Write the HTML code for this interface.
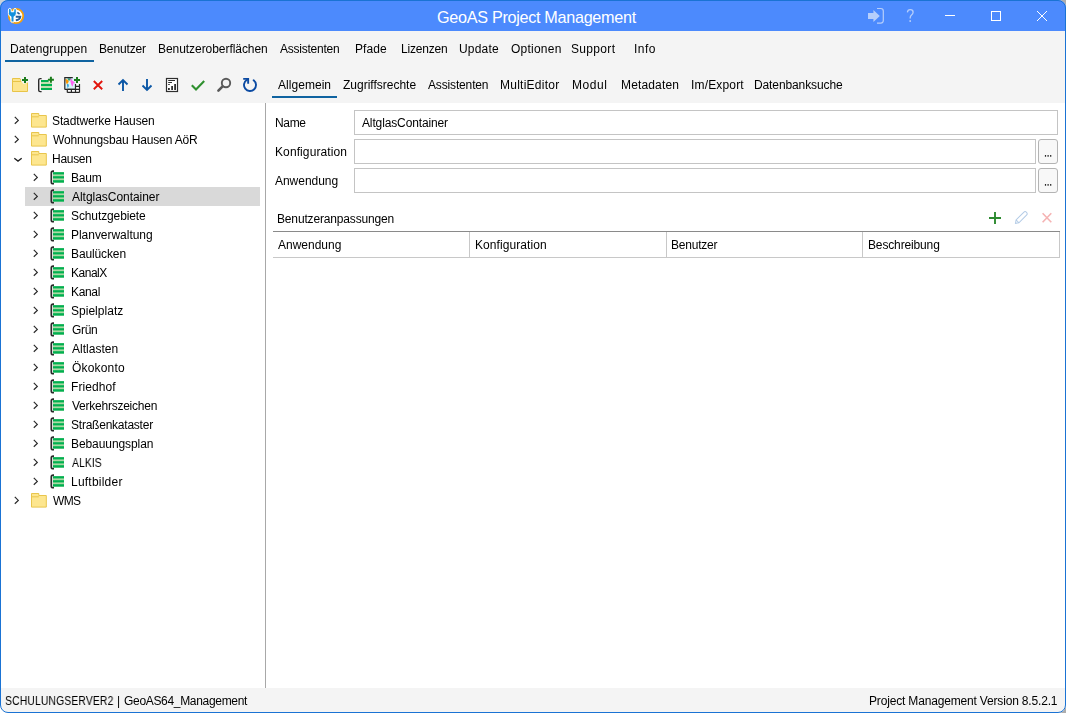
<!DOCTYPE html>
<html><head><meta charset="utf-8">
<style>
*{margin:0;padding:0;box-sizing:border-box}
html,body{width:1066px;height:713px;overflow:hidden;background:#adadad}
body{font-family:"Liberation Sans",sans-serif;font-size:12px;color:#000;position:relative}
.a{position:absolute}
.t{position:absolute;white-space:nowrap;line-height:16px;height:16px;will-change:transform}
#win{position:absolute;left:0;top:0;width:1066px;height:713px;border-radius:8px;background:#f4f4f4;overflow:hidden}
#frame{position:absolute;left:0;top:0;width:1066px;height:713px;border:1px solid #1a73d4;border-radius:8px}
.tb{position:absolute;border:1px solid #c4c4c4;background:#fff}
.btn{position:absolute;border:1px solid #b4b4b4;border-radius:3px;background:#f8f8f8}
</style></head><body>
<div class="a" style="left:0;top:700px;width:14px;height:13px;background:#fff"></div>
<div class="a" style="left:0;top:0;width:12px;height:12px;background:#c9d2d9"></div>
<div id="win">
 <div class="a" style="left:0;top:0;width:1066px;height:31px;background:#4c8afd"></div>
 <svg class="a" style="left:0px;top:0px" width="32" height="32" viewBox="0 0 32 32">
 <circle cx="16" cy="16" r="7.2" fill="#fff" stroke="#f6a10c" stroke-width="1.8"/>
 <path d="M8.4 10 Q8.4 8.4 9.8 8.4 Q11.2 8.4 11.2 10 V11.8 H13.8 V10 Q13.8 8.4 15.05 8.4 Q16.3 8.4 16.3 10 V13.5 Q16.3 16.3 14 16.6 V22 H11 V16.6 Q8.4 16.3 8.4 13.5 Z" fill="#1290dc" stroke="#fff" stroke-width="1"/>
 <path d="M17.3 12.3 L19.6 14.2" stroke="#2b5f96" stroke-width="1.6"/>
 <path d="M15.8 16.8 H20.3 Q20 19.6 15.8 20.2" fill="none" stroke="#2b5f96" stroke-width="1.9"/>
</svg>

 <div class="a" id="title" style="left:437px;top:6.5px;font-size:16.2px;line-height:20px;letter-spacing:-0.3px;color:#fff;white-space:nowrap">GeoAS Project Management</div>
 <svg class="a" style="left:850px;top:0px" width="216" height="31" viewBox="850 0 216 31">
 <path d="M868 13 H873.4 V9.9 L879.8 16 L873.4 22 V18.9 H868 Z" fill="#b6cefb"/>
 <path d="M877 8.5 H880.8 Q883.3 8.5 883.3 11 V20.6 Q883.3 23.1 880.8 23.1 H877" fill="none" stroke="#b6cefb" stroke-width="1.2"/>
 <path d="M907.4 12.4 Q907.6 9.6 910.3 9.6 Q913.1 9.6 913.1 12.2 Q913.1 13.8 911.3 15.2 Q910.2 16.1 910.2 17.8 V18.4" fill="none" stroke="#b6cefb" stroke-width="1.3"/>
 <rect x="909.4" y="20.2" width="1.6" height="1.7" fill="#b6cefb"/>
 <path d="M945 15.5 H955" stroke="#fff" stroke-width="1"/>
 <rect x="991.5" y="11.5" width="9" height="9" fill="none" stroke="#fff" stroke-width="1"/>
 <path d="M1037 11 L1047 21 M1047 11 L1037 21" stroke="#fff" stroke-width="1"/>
</svg>

 <div class="a" style="left:5px;top:60px;width:89px;height:2px;background:#0f63a0"></div>
 <svg class="a" style="left:0px;top:70px" width="270" height="30" viewBox="0 70 270 30">
 <!-- folder + -->
 <path d="M12.5 78.5 H20 L21 80 V81.5 H27.5 V91.5 H12.5 Z" fill="#fde58e" stroke="#e8c447" stroke-width="1"/>
 <path d="M12.5 81.5 H21" stroke="#e8c447" stroke-width="1"/>
 <path d="M21 76 H29.5 V82.5 H27.5 L23.5 84 L21 81 Z" fill="#f4f4f4"/>
 <path d="M25 77 V83 M22 80 H28" stroke="#1c7c1c" stroke-width="2"/>
 <!-- table + -->
 <path d="M41.6 78.6 H40.2 Q38.7 78.6 38.7 80.1 V90.3 Q38.7 91.6 40.2 91.6 H41.6" fill="none" stroke="#2b2b2b" stroke-width="1.4"/>
 <rect x="41" y="80" width="11" height="10" fill="#bfe0ae"/>
 <rect x="41" y="80" width="11" height="2" fill="#00b050"/>
 <rect x="41" y="84" width="11" height="2" fill="#00b050"/>
 <rect x="41" y="88" width="11" height="2" fill="#00b050"/>
 <path d="M46.5 76 H55 V83 H51 L49 82.5 Z" fill="#f4f4f4"/>
 <path d="M50.9 76.7 V82.7 M47.9 79.7 H53.9" stroke="#1c7c1c" stroke-width="2"/>
 <!-- map + -->
 <rect x="64.8" y="77.7" width="10.6" height="11.6" fill="#d9f3f7"/>
 <path d="M65.2 79 L67.5 79.5 L68.8 81.5 L67 84.5 L66 82.5 Z" fill="#ff9800"/>
 <path d="M67.5 78.3 L71 78.3 L70.5 80.2 L68.5 80.8 Z" fill="#2e9a76"/>
 <path d="M70.6 79 L71.8 78.8 L72 80.5 L74 81.8 L75.3 83.2 L73.5 83.2 L72.6 86.8 L71.4 85 L70.4 81.5 Z" fill="#ff66f2"/>
 <path d="M67 84 L68.8 84.6 L68.6 86.5 L67.6 88.2 Z" fill="#1e9ad6"/>
 <path d="M64.8 89.6 V77.7 H72.8" fill="none" stroke="#262626" stroke-width="1.2"/>
 <path d="M64.8 89.3 H75.5" stroke="#262626" stroke-width="1.2"/>
 <rect x="75.5" y="84.2" width="4" height="8.2" fill="#fff"/>
 <rect x="67.3" y="89.3" width="12.2" height="3.1" fill="#fff"/>
 <path d="M75.5 84 V92.4 M79.5 84 V92.4 M67.3 89.3 V92.4 M71.4 89.3 V92.4 M67.3 92.4 H79.5 M67.3 89.3 H79.5 M75.5 86.3 H79.5" fill="none" stroke="#262626" stroke-width="1.2"/>
 <path d="M77 77 V83 M74 80 H80" stroke="#1c7c1c" stroke-width="2"/>
 <!-- red x -->
 <path d="M93.8 81 L102.2 89.2 M102.2 81 L93.8 89.2" stroke="#e2140c" stroke-width="1.9"/>
 <!-- up arrow -->
 <path d="M123 79.8 V91 M118.5 84.5 L123 80 L127.5 84.5" fill="none" stroke="#0b57a6" stroke-width="1.9"/>
 <!-- down arrow -->
 <path d="M147 79 V90.2 M142.5 85.5 L147 90 L151.5 85.5" fill="none" stroke="#0b57a6" stroke-width="1.9"/>
 <!-- report -->
 <rect x="166.5" y="78.5" width="11" height="13" fill="#fff" stroke="#2e2e2e" stroke-width="1.2"/>
 <path d="M168.2 80.5 H175 M168.2 82.5 H172 M168.2 84.5 H169.8" stroke="#2e2e2e" stroke-width="1"/>
 <rect x="168" y="88" width="1.8" height="2" fill="#2e2e2e"/>
 <rect x="171.2" y="86" width="1.8" height="4" fill="#2e2e2e"/>
 <rect x="174.2" y="84" width="1.8" height="6" fill="#2e2e2e"/>
 <!-- check -->
 <path d="M191.8 85.2 L196 89.4 L204.2 81" fill="none" stroke="#2f902f" stroke-width="2.1"/>
 <!-- search -->
 <circle cx="226" cy="83" r="4.2" fill="none" stroke="#5a5a5a" stroke-width="1.9"/>
 <path d="M222.6 86.4 L218.4 90.6" stroke="#5a5a5a" stroke-width="2.6" stroke-linecap="round"/>
 <!-- refresh -->
 <path d="M247 79.8 A6 6 0 1 0 253.6 80.2" fill="none" stroke="#0b4aa2" stroke-width="1.9" stroke-linecap="round"/>
 <path d="M243.2 77.9 H249.1 V83.7 H247.2 V79.8 H243.2 Z" fill="#0b4aa2"/>
</svg>

 <div class="a" style="left:272px;top:96px;width:65px;height:2px;background:#0f63a0"></div>
 <div class="a" style="left:0;top:103px;width:265px;height:585px;background:#fff"></div>
 <div class="a" style="left:266px;top:103px;width:800px;height:585px;background:#fff"></div>
 <div class="a" style="left:265px;top:103px;width:1px;height:585px;background:#a8a8a8"></div>
 <svg class="a" style="left:13px;top:116px" width="8" height="10" viewBox="0 0 8 10"><path d="M1.8 0.8 L5.3 4.4 L1.8 7.8" fill="none" stroke="#2a2a2a" stroke-width="1.2"/></svg>
<svg class="a" style="left:31px;top:113.2px" width="17" height="16" viewBox="0 0 17 16"><path d="M0.5 0.5 H7.8 V2.5 H15.3 V14.1 H0.5 Z" fill="#fde68f" stroke="#e8c54c" stroke-width="1"/><path d="M0.5 3.8 H7.8" stroke="#e8c54c" stroke-width="1"/></svg>
<svg class="a" style="left:13px;top:135px" width="8" height="10" viewBox="0 0 8 10"><path d="M1.8 0.8 L5.3 4.4 L1.8 7.8" fill="none" stroke="#2a2a2a" stroke-width="1.2"/></svg>
<svg class="a" style="left:31px;top:132.2px" width="17" height="16" viewBox="0 0 17 16"><path d="M0.5 0.5 H7.8 V2.5 H15.3 V14.1 H0.5 Z" fill="#fde68f" stroke="#e8c54c" stroke-width="1"/><path d="M0.5 3.8 H7.8" stroke="#e8c54c" stroke-width="1"/></svg>
<svg class="a" style="left:13px;top:156px" width="10" height="8" viewBox="0 0 10 8"><path d="M1.3 2.2 L5 5.1 L8.7 2.2" fill="none" stroke="#222" stroke-width="1.3"/></svg>
<svg class="a" style="left:31px;top:151.2px" width="17" height="16" viewBox="0 0 17 16"><path d="M0.5 0.5 H7.8 V2.5 H15.3 V14.1 H0.5 Z" fill="#fde68f" stroke="#e8c54c" stroke-width="1"/><path d="M0.5 3.8 H7.8" stroke="#e8c54c" stroke-width="1"/></svg>
<svg class="a" style="left:32px;top:173px" width="8" height="10" viewBox="0 0 8 10"><path d="M1.8 0.8 L5.3 4.4 L1.8 7.8" fill="none" stroke="#2a2a2a" stroke-width="1.2"/></svg>
<svg class="a" style="left:50px;top:169px" width="15" height="17" viewBox="0 0 15 17"><path d="M4 2.15 H3.1 Q1.3 2.15 1.3 3.9 V13 Q1.3 14.75 3.1 14.75 H4" fill="none" stroke="#2a2a2a" stroke-width="1.7"/><rect x="3" y="3.1" width="11" height="10.6" fill="#acd9a4"/><rect x="3" y="3.2" width="11" height="2.2" fill="#00b050"/><rect x="3" y="7.2" width="11" height="2.2" fill="#00b050"/><rect x="3" y="11.2" width="11" height="2.4" fill="#00b050"/></svg>
<div class="a" style="left:25px;top:187px;width:235px;height:19px;background:#d9d9d9"></div>
<svg class="a" style="left:32px;top:192px" width="8" height="10" viewBox="0 0 8 10"><path d="M1.8 0.8 L5.3 4.4 L1.8 7.8" fill="none" stroke="#2a2a2a" stroke-width="1.2"/></svg>
<svg class="a" style="left:50px;top:188px" width="15" height="17" viewBox="0 0 15 17"><path d="M4 2.15 H3.1 Q1.3 2.15 1.3 3.9 V13 Q1.3 14.75 3.1 14.75 H4" fill="none" stroke="#2a2a2a" stroke-width="1.7"/><rect x="3" y="3.1" width="11" height="10.6" fill="#acd9a4"/><rect x="3" y="3.2" width="11" height="2.2" fill="#00b050"/><rect x="3" y="7.2" width="11" height="2.2" fill="#00b050"/><rect x="3" y="11.2" width="11" height="2.4" fill="#00b050"/></svg>
<svg class="a" style="left:32px;top:211px" width="8" height="10" viewBox="0 0 8 10"><path d="M1.8 0.8 L5.3 4.4 L1.8 7.8" fill="none" stroke="#2a2a2a" stroke-width="1.2"/></svg>
<svg class="a" style="left:50px;top:207px" width="15" height="17" viewBox="0 0 15 17"><path d="M4 2.15 H3.1 Q1.3 2.15 1.3 3.9 V13 Q1.3 14.75 3.1 14.75 H4" fill="none" stroke="#2a2a2a" stroke-width="1.7"/><rect x="3" y="3.1" width="11" height="10.6" fill="#acd9a4"/><rect x="3" y="3.2" width="11" height="2.2" fill="#00b050"/><rect x="3" y="7.2" width="11" height="2.2" fill="#00b050"/><rect x="3" y="11.2" width="11" height="2.4" fill="#00b050"/></svg>
<svg class="a" style="left:32px;top:230px" width="8" height="10" viewBox="0 0 8 10"><path d="M1.8 0.8 L5.3 4.4 L1.8 7.8" fill="none" stroke="#2a2a2a" stroke-width="1.2"/></svg>
<svg class="a" style="left:50px;top:226px" width="15" height="17" viewBox="0 0 15 17"><path d="M4 2.15 H3.1 Q1.3 2.15 1.3 3.9 V13 Q1.3 14.75 3.1 14.75 H4" fill="none" stroke="#2a2a2a" stroke-width="1.7"/><rect x="3" y="3.1" width="11" height="10.6" fill="#acd9a4"/><rect x="3" y="3.2" width="11" height="2.2" fill="#00b050"/><rect x="3" y="7.2" width="11" height="2.2" fill="#00b050"/><rect x="3" y="11.2" width="11" height="2.4" fill="#00b050"/></svg>
<svg class="a" style="left:32px;top:249px" width="8" height="10" viewBox="0 0 8 10"><path d="M1.8 0.8 L5.3 4.4 L1.8 7.8" fill="none" stroke="#2a2a2a" stroke-width="1.2"/></svg>
<svg class="a" style="left:50px;top:245px" width="15" height="17" viewBox="0 0 15 17"><path d="M4 2.15 H3.1 Q1.3 2.15 1.3 3.9 V13 Q1.3 14.75 3.1 14.75 H4" fill="none" stroke="#2a2a2a" stroke-width="1.7"/><rect x="3" y="3.1" width="11" height="10.6" fill="#acd9a4"/><rect x="3" y="3.2" width="11" height="2.2" fill="#00b050"/><rect x="3" y="7.2" width="11" height="2.2" fill="#00b050"/><rect x="3" y="11.2" width="11" height="2.4" fill="#00b050"/></svg>
<svg class="a" style="left:32px;top:268px" width="8" height="10" viewBox="0 0 8 10"><path d="M1.8 0.8 L5.3 4.4 L1.8 7.8" fill="none" stroke="#2a2a2a" stroke-width="1.2"/></svg>
<svg class="a" style="left:50px;top:264px" width="15" height="17" viewBox="0 0 15 17"><path d="M4 2.15 H3.1 Q1.3 2.15 1.3 3.9 V13 Q1.3 14.75 3.1 14.75 H4" fill="none" stroke="#2a2a2a" stroke-width="1.7"/><rect x="3" y="3.1" width="11" height="10.6" fill="#acd9a4"/><rect x="3" y="3.2" width="11" height="2.2" fill="#00b050"/><rect x="3" y="7.2" width="11" height="2.2" fill="#00b050"/><rect x="3" y="11.2" width="11" height="2.4" fill="#00b050"/></svg>
<svg class="a" style="left:32px;top:287px" width="8" height="10" viewBox="0 0 8 10"><path d="M1.8 0.8 L5.3 4.4 L1.8 7.8" fill="none" stroke="#2a2a2a" stroke-width="1.2"/></svg>
<svg class="a" style="left:50px;top:283px" width="15" height="17" viewBox="0 0 15 17"><path d="M4 2.15 H3.1 Q1.3 2.15 1.3 3.9 V13 Q1.3 14.75 3.1 14.75 H4" fill="none" stroke="#2a2a2a" stroke-width="1.7"/><rect x="3" y="3.1" width="11" height="10.6" fill="#acd9a4"/><rect x="3" y="3.2" width="11" height="2.2" fill="#00b050"/><rect x="3" y="7.2" width="11" height="2.2" fill="#00b050"/><rect x="3" y="11.2" width="11" height="2.4" fill="#00b050"/></svg>
<svg class="a" style="left:32px;top:306px" width="8" height="10" viewBox="0 0 8 10"><path d="M1.8 0.8 L5.3 4.4 L1.8 7.8" fill="none" stroke="#2a2a2a" stroke-width="1.2"/></svg>
<svg class="a" style="left:50px;top:302px" width="15" height="17" viewBox="0 0 15 17"><path d="M4 2.15 H3.1 Q1.3 2.15 1.3 3.9 V13 Q1.3 14.75 3.1 14.75 H4" fill="none" stroke="#2a2a2a" stroke-width="1.7"/><rect x="3" y="3.1" width="11" height="10.6" fill="#acd9a4"/><rect x="3" y="3.2" width="11" height="2.2" fill="#00b050"/><rect x="3" y="7.2" width="11" height="2.2" fill="#00b050"/><rect x="3" y="11.2" width="11" height="2.4" fill="#00b050"/></svg>
<svg class="a" style="left:32px;top:325px" width="8" height="10" viewBox="0 0 8 10"><path d="M1.8 0.8 L5.3 4.4 L1.8 7.8" fill="none" stroke="#2a2a2a" stroke-width="1.2"/></svg>
<svg class="a" style="left:50px;top:321px" width="15" height="17" viewBox="0 0 15 17"><path d="M4 2.15 H3.1 Q1.3 2.15 1.3 3.9 V13 Q1.3 14.75 3.1 14.75 H4" fill="none" stroke="#2a2a2a" stroke-width="1.7"/><rect x="3" y="3.1" width="11" height="10.6" fill="#acd9a4"/><rect x="3" y="3.2" width="11" height="2.2" fill="#00b050"/><rect x="3" y="7.2" width="11" height="2.2" fill="#00b050"/><rect x="3" y="11.2" width="11" height="2.4" fill="#00b050"/></svg>
<svg class="a" style="left:32px;top:344px" width="8" height="10" viewBox="0 0 8 10"><path d="M1.8 0.8 L5.3 4.4 L1.8 7.8" fill="none" stroke="#2a2a2a" stroke-width="1.2"/></svg>
<svg class="a" style="left:50px;top:340px" width="15" height="17" viewBox="0 0 15 17"><path d="M4 2.15 H3.1 Q1.3 2.15 1.3 3.9 V13 Q1.3 14.75 3.1 14.75 H4" fill="none" stroke="#2a2a2a" stroke-width="1.7"/><rect x="3" y="3.1" width="11" height="10.6" fill="#acd9a4"/><rect x="3" y="3.2" width="11" height="2.2" fill="#00b050"/><rect x="3" y="7.2" width="11" height="2.2" fill="#00b050"/><rect x="3" y="11.2" width="11" height="2.4" fill="#00b050"/></svg>
<svg class="a" style="left:32px;top:363px" width="8" height="10" viewBox="0 0 8 10"><path d="M1.8 0.8 L5.3 4.4 L1.8 7.8" fill="none" stroke="#2a2a2a" stroke-width="1.2"/></svg>
<svg class="a" style="left:50px;top:359px" width="15" height="17" viewBox="0 0 15 17"><path d="M4 2.15 H3.1 Q1.3 2.15 1.3 3.9 V13 Q1.3 14.75 3.1 14.75 H4" fill="none" stroke="#2a2a2a" stroke-width="1.7"/><rect x="3" y="3.1" width="11" height="10.6" fill="#acd9a4"/><rect x="3" y="3.2" width="11" height="2.2" fill="#00b050"/><rect x="3" y="7.2" width="11" height="2.2" fill="#00b050"/><rect x="3" y="11.2" width="11" height="2.4" fill="#00b050"/></svg>
<svg class="a" style="left:32px;top:382px" width="8" height="10" viewBox="0 0 8 10"><path d="M1.8 0.8 L5.3 4.4 L1.8 7.8" fill="none" stroke="#2a2a2a" stroke-width="1.2"/></svg>
<svg class="a" style="left:50px;top:378px" width="15" height="17" viewBox="0 0 15 17"><path d="M4 2.15 H3.1 Q1.3 2.15 1.3 3.9 V13 Q1.3 14.75 3.1 14.75 H4" fill="none" stroke="#2a2a2a" stroke-width="1.7"/><rect x="3" y="3.1" width="11" height="10.6" fill="#acd9a4"/><rect x="3" y="3.2" width="11" height="2.2" fill="#00b050"/><rect x="3" y="7.2" width="11" height="2.2" fill="#00b050"/><rect x="3" y="11.2" width="11" height="2.4" fill="#00b050"/></svg>
<svg class="a" style="left:32px;top:401px" width="8" height="10" viewBox="0 0 8 10"><path d="M1.8 0.8 L5.3 4.4 L1.8 7.8" fill="none" stroke="#2a2a2a" stroke-width="1.2"/></svg>
<svg class="a" style="left:50px;top:397px" width="15" height="17" viewBox="0 0 15 17"><path d="M4 2.15 H3.1 Q1.3 2.15 1.3 3.9 V13 Q1.3 14.75 3.1 14.75 H4" fill="none" stroke="#2a2a2a" stroke-width="1.7"/><rect x="3" y="3.1" width="11" height="10.6" fill="#acd9a4"/><rect x="3" y="3.2" width="11" height="2.2" fill="#00b050"/><rect x="3" y="7.2" width="11" height="2.2" fill="#00b050"/><rect x="3" y="11.2" width="11" height="2.4" fill="#00b050"/></svg>
<svg class="a" style="left:32px;top:420px" width="8" height="10" viewBox="0 0 8 10"><path d="M1.8 0.8 L5.3 4.4 L1.8 7.8" fill="none" stroke="#2a2a2a" stroke-width="1.2"/></svg>
<svg class="a" style="left:50px;top:416px" width="15" height="17" viewBox="0 0 15 17"><path d="M4 2.15 H3.1 Q1.3 2.15 1.3 3.9 V13 Q1.3 14.75 3.1 14.75 H4" fill="none" stroke="#2a2a2a" stroke-width="1.7"/><rect x="3" y="3.1" width="11" height="10.6" fill="#acd9a4"/><rect x="3" y="3.2" width="11" height="2.2" fill="#00b050"/><rect x="3" y="7.2" width="11" height="2.2" fill="#00b050"/><rect x="3" y="11.2" width="11" height="2.4" fill="#00b050"/></svg>
<svg class="a" style="left:32px;top:439px" width="8" height="10" viewBox="0 0 8 10"><path d="M1.8 0.8 L5.3 4.4 L1.8 7.8" fill="none" stroke="#2a2a2a" stroke-width="1.2"/></svg>
<svg class="a" style="left:50px;top:435px" width="15" height="17" viewBox="0 0 15 17"><path d="M4 2.15 H3.1 Q1.3 2.15 1.3 3.9 V13 Q1.3 14.75 3.1 14.75 H4" fill="none" stroke="#2a2a2a" stroke-width="1.7"/><rect x="3" y="3.1" width="11" height="10.6" fill="#acd9a4"/><rect x="3" y="3.2" width="11" height="2.2" fill="#00b050"/><rect x="3" y="7.2" width="11" height="2.2" fill="#00b050"/><rect x="3" y="11.2" width="11" height="2.4" fill="#00b050"/></svg>
<svg class="a" style="left:32px;top:458px" width="8" height="10" viewBox="0 0 8 10"><path d="M1.8 0.8 L5.3 4.4 L1.8 7.8" fill="none" stroke="#2a2a2a" stroke-width="1.2"/></svg>
<svg class="a" style="left:50px;top:454px" width="15" height="17" viewBox="0 0 15 17"><path d="M4 2.15 H3.1 Q1.3 2.15 1.3 3.9 V13 Q1.3 14.75 3.1 14.75 H4" fill="none" stroke="#2a2a2a" stroke-width="1.7"/><rect x="3" y="3.1" width="11" height="10.6" fill="#acd9a4"/><rect x="3" y="3.2" width="11" height="2.2" fill="#00b050"/><rect x="3" y="7.2" width="11" height="2.2" fill="#00b050"/><rect x="3" y="11.2" width="11" height="2.4" fill="#00b050"/></svg>
<svg class="a" style="left:32px;top:477px" width="8" height="10" viewBox="0 0 8 10"><path d="M1.8 0.8 L5.3 4.4 L1.8 7.8" fill="none" stroke="#2a2a2a" stroke-width="1.2"/></svg>
<svg class="a" style="left:50px;top:473px" width="15" height="17" viewBox="0 0 15 17"><path d="M4 2.15 H3.1 Q1.3 2.15 1.3 3.9 V13 Q1.3 14.75 3.1 14.75 H4" fill="none" stroke="#2a2a2a" stroke-width="1.7"/><rect x="3" y="3.1" width="11" height="10.6" fill="#acd9a4"/><rect x="3" y="3.2" width="11" height="2.2" fill="#00b050"/><rect x="3" y="7.2" width="11" height="2.2" fill="#00b050"/><rect x="3" y="11.2" width="11" height="2.4" fill="#00b050"/></svg>
<svg class="a" style="left:13px;top:496px" width="8" height="10" viewBox="0 0 8 10"><path d="M1.8 0.8 L5.3 4.4 L1.8 7.8" fill="none" stroke="#2a2a2a" stroke-width="1.2"/></svg>
<svg class="a" style="left:31px;top:493.2px" width="17" height="16" viewBox="0 0 17 16"><path d="M0.5 0.5 H7.8 V2.5 H15.3 V14.1 H0.5 Z" fill="#fde68f" stroke="#e8c54c" stroke-width="1"/><path d="M0.5 3.8 H7.8" stroke="#e8c54c" stroke-width="1"/></svg>
 <div class="tb" style="left:354px;top:110px;width:704px;height:25px"></div>
 <div class="tb" style="left:354px;top:139px;width:682px;height:25px"></div>
 <div class="tb" style="left:354px;top:168px;width:682px;height:25px"></div>
 <div class="btn" style="left:1038px;top:139px;width:20px;height:25px"></div>
 <div class="btn" style="left:1038px;top:168px;width:20px;height:25px"></div>
 <svg class="a" style="left:1040px;top:150px" width="16" height="40" viewBox="1040 150 16 40"><path d="M1044.9 155 h1.2 v1.7 h-1.2 Z M1047.5 155 h1.2 v1.7 h-1.2 Z M1050.1 155 h1.2 v1.7 h-1.2 Z M1044.9 184 h1.2 v1.7 h-1.2 Z M1047.5 184 h1.2 v1.7 h-1.2 Z M1050.1 184 h1.2 v1.7 h-1.2 Z" fill="#262626"/></svg>
 <svg class="a" style="left:980px;top:205px" width="80" height="25" viewBox="980 205 80 25">
  <path d="M995 212 V224 M989 218 H1001" stroke="#2d8a30" stroke-width="1.9"/>
  <g transform="translate(1021,217.8) rotate(-45)"><path d="M-7.8 0 L-5 -2 H5.8 A2 2 0 0 1 5.8 2 H-5 Z M-5 -2 V2" fill="none" stroke="#b3cbe6" stroke-width="1"/></g>
  <path d="M1042.6 213.3 L1051.3 222.3 M1051.3 213.3 L1042.6 222.3" stroke="#f5b3b3" stroke-width="1.6"/>
 </svg>
 <div class="a" style="left:273px;top:231px;width:787px;height:1px;background:#8a8a8a"></div>
 <div class="a" style="left:273px;top:257px;width:787px;height:1px;background:#c8c8c8"></div>
 <div class="a" style="left:469px;top:232px;width:1px;height:25px;background:#c8c8c8"></div>
 <div class="a" style="left:666px;top:232px;width:1px;height:25px;background:#c8c8c8"></div>
 <div class="a" style="left:862px;top:232px;width:1px;height:25px;background:#c8c8c8"></div>
 <div class="a" style="left:1059px;top:232px;width:1px;height:25px;background:#c8c8c8"></div>
 <div class="t" id="t0" style="left:10.32px;top:41px;letter-spacing:0.100px">Datengruppen</div>
<div class="t" id="t1" style="left:99.16px;top:41px;letter-spacing:-0.143px">Benutzer</div>
<div class="t" id="t2" style="left:158.32px;top:41px;letter-spacing:-0.053px">Benutzeroberflächen</div>
<div class="t" id="t3" style="left:280.00px;top:41px;letter-spacing:-0.240px">Assistenten</div>
<div class="t" id="t4" style="left:355.32px;top:41px;letter-spacing:0.065px">Pfade</div>
<div class="t" id="t5" style="left:401.40px;top:41px;letter-spacing:-0.209px">Lizenzen</div>
<div class="t" id="t6" style="left:458.64px;top:41px;letter-spacing:0.172px">Update</div>
<div class="t" id="t7" style="left:510.60px;top:41px;letter-spacing:0.231px">Optionen</div>
<div class="t" id="t8" style="left:571.08px;top:41px;letter-spacing:0.323px">Support</div>
<div class="t" id="t9" style="left:634.48px;top:41px;letter-spacing:0.460px">Info</div>
<div class="t" id="t10" style="left:278.24px;top:77px;letter-spacing:0.040px">Allgemein</div>
<div class="t" id="t11" style="left:343.24px;top:77px;letter-spacing:-0.005px">Zugriffsrechte</div>
<div class="t" id="t12" style="left:428.48px;top:77px;letter-spacing:-0.152px">Assistenten</div>
<div class="t" id="t13" style="left:500.16px;top:77px;letter-spacing:0.244px">MultiEditor</div>
<div class="t" id="t14" style="left:572.32px;top:77px;letter-spacing:0.570px">Modul</div>
<div class="t" id="t15" style="left:621.00px;top:77px;letter-spacing:0.153px">Metadaten</div>
<div class="t" id="t16" style="left:690.76px;top:77px;letter-spacing:0.160px">Im/Export</div>
<div class="t" id="t17" style="left:754.08px;top:77px;letter-spacing:-0.111px">Datenbanksuche</div>
<div class="t" id="t18" style="left:52.08px;top:113px;letter-spacing:-0.125px">Stadtwerke Hausen</div>
<div class="t" id="t19" style="left:53.32px;top:132px;letter-spacing:-0.150px">Wohnungsbau Hausen AöR</div>
<div class="t" id="t20" style="left:52.32px;top:151px;letter-spacing:-0.288px">Hausen</div>
<div class="t" id="t21" style="left:71.40px;top:170px;letter-spacing:-0.227px">Baum</div>
<div class="t" id="t22" style="left:72.00px;top:189px;letter-spacing:-0.037px">AltglasContainer</div>
<div class="t" id="t23" style="left:71.08px;top:208px;letter-spacing:-0.110px">Schutzgebiete</div>
<div class="t" id="t24" style="left:71.08px;top:227px;letter-spacing:-0.031px">Planverwaltung</div>
<div class="t" id="t25" style="left:71.40px;top:246px;letter-spacing:-0.120px">Baulücken</div>
<div class="t" id="t26" style="left:71.40px;top:265px;letter-spacing:-0.480px">KanalX</div>
<div class="t" id="t27" style="left:71.40px;top:284px;letter-spacing:-0.350px">Kanal</div>
<div class="t" id="t28" style="left:71.08px;top:303px;letter-spacing:0.024px">Spielplatz</div>
<div class="t" id="t29" style="left:72.08px;top:322px;letter-spacing:-0.333px">Grün</div>
<div class="t" id="t30" style="left:72.16px;top:341px;letter-spacing:0.020px">Altlasten</div>
<div class="t" id="t31" style="left:72.36px;top:360px;letter-spacing:0.177px">Ökokonto</div>
<div class="t" id="t32" style="left:71.16px;top:379px;letter-spacing:0.086px">Friedhof</div>
<div class="t" id="t33" style="left:72.16px;top:398px;letter-spacing:-0.243px">Verkehrszeichen</div>
<div class="t" id="t34" style="left:71.16px;top:417px;letter-spacing:-0.230px">Straßenkataster</div>
<div class="t" id="t35" style="left:71.16px;top:436px;letter-spacing:-0.083px">Bebauungsplan</div>
<div class="t" id="t36" style="left:72.16px;top:455px;transform:scaleX(0.87);transform-origin:0 0">ALKIS</div>
<div class="t" id="t37" style="left:71.16px;top:474px;letter-spacing:0.227px">Luftbilder</div>
<div class="t" id="t38" style="left:53.08px;top:493px;letter-spacing:-0.690px">WMS</div>
<div class="t" id="t39" style="left:275.00px;top:115px;letter-spacing:-0.353px">Name</div>
<div class="t" id="t40" style="left:275.00px;top:144px;letter-spacing:0.102px">Konfiguration</div>
<div class="t" id="t41" style="left:275.18px;top:173px;letter-spacing:-0.035px">Anwendung</div>
<div class="t" id="t42" style="left:361.68px;top:115px;letter-spacing:-0.131px">AltglasContainer</div>
<div class="t" id="t43" style="left:277.12px;top:211px;letter-spacing:-0.158px">Benutzeranpassungen</div>
<div class="t" id="t44" style="left:278.12px;top:237px">Anwendung</div>
<div class="t" id="t45" style="left:474.86px;top:237px;letter-spacing:0.082px">Konfiguration</div>
<div class="t" id="t46" style="left:671.28px;top:237px;letter-spacing:-0.209px">Benutzer</div>
<div class="t" id="t47" style="left:868.00px;top:237px;letter-spacing:-0.142px">Beschreibung</div>
<div class="t" id="t48" style="left:5.46px;top:693px;transform:scaleX(0.88);transform-origin:0 0">SCHULUNGSERVER2</div>
<div class="t" id="t49" style="left:116.68px;top:693px">|</div>
<div class="t" id="t50" style="left:123.94px;top:693px;letter-spacing:-0.316px">GeoAS64_Management</div>
<div class="t" id="t51" style="left:869.35px;top:693px;letter-spacing:-0.170px">Project Management Version 8.5.2.1</div>
</div>
<div id="frame"></div>
</body></html>
